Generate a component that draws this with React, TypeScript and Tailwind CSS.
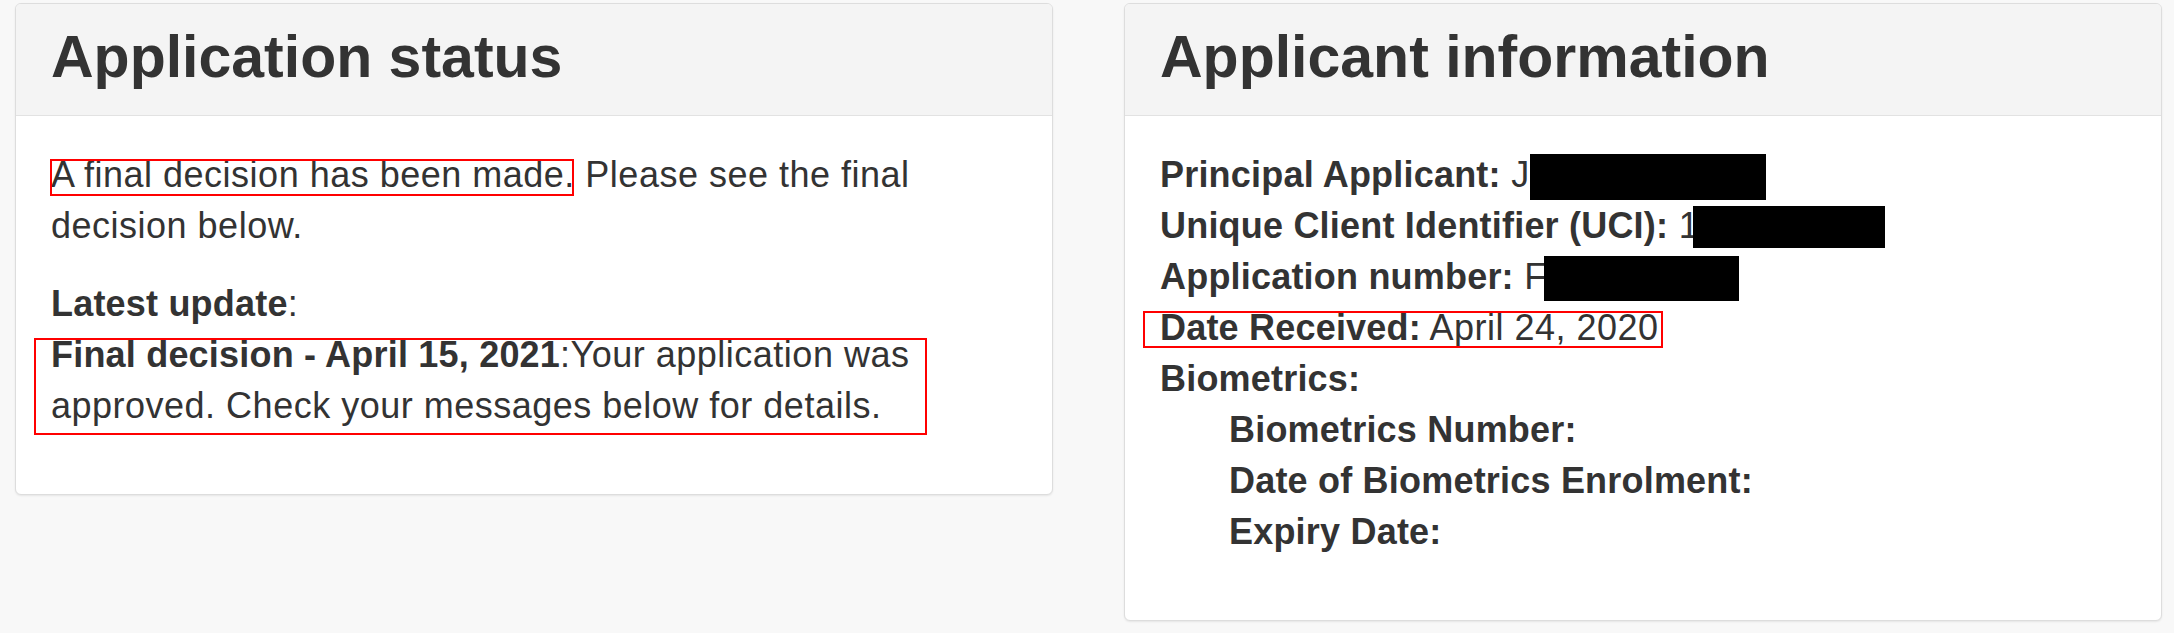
import React from 'react';

// red annotation frame drawn over the screenshot text
function Mark({ className }: { className: string }) {
  return <span className={`pointer-events-none absolute border-2 border-[#ff0000] ${className}`} />;
}

function Card({ title, children }: { title: string; children: React.ReactNode }) {
  return (
    <div className="rounded-[6px] border border-[#dddddd] bg-white shadow-[0_1px_2px_rgba(0,0,0,0.08)] overflow-hidden">
      <div className="bg-[#f4f4f4] border-b border-[#e2e2e2] px-[35px] pt-[21px] pb-[26px]">
        <h2 className="text-[59px] leading-[64px] font-bold text-[#333333]">{title}</h2>
      </div>
      <div className="px-[35px] pt-[33px] pb-[36px] text-[36px] leading-[51px] tracking-[0.5px] text-[#333333] [&_strong]:tracking-[0.2px] [&_.font-bold]:tracking-[0.2px]">
        {children}
      </div>
    </div>
  );
}

function Redacted({ w, h, shift }: { w: string; h: string; shift: string }) {
  return <span className={`inline-block align-top bg-black ${w} ${h} ${shift}`} />;
}

export default function App() {
  return (
    <div
      className="min-h-screen bg-[#f8f8f8] pt-[3px]"
      style={{ fontFamily: '"Liberation Sans", Helvetica, Arial, sans-serif' }}
    >
      <div className="grid grid-cols-2 items-start gap-[71px] pl-[15px] pr-[12px]">
        <Card title="Application status">
          <p className="mb-[27px]">
            <span className="relative">
              A final decision has been made.
              <Mark className="-left-[1px] top-[5px] w-[524px] h-[37px]" />
            </span>{' '}
            Please see the final decision below.
          </p>
          <div className="mb-[27px]">
            <div>
              <strong>Latest update</strong>:
            </div>
            <div className="relative">
              <strong>Final decision - April 15, 2021</strong>:Your application was approved. Check your messages below
              for details.
              <Mark className="-left-[17px] top-[9px] w-[893px] h-[97px]" />
            </div>
          </div>
        </Card>

        <Card title="Applicant information">
          <div className="mb-[27px]">
            <div className="whitespace-nowrap">
              <strong>Principal Applicant:</strong> J
              <Redacted w="w-[236px]" h="h-[46px]" shift="translate-y-[5px]" />
            </div>
            <div className="whitespace-nowrap">
              <strong>Unique Client Identifier (UCI):</strong> 1
              <Redacted w="w-[192px]" h="h-[42px]" shift="translate-y-[6px] -ml-[6px]" />
            </div>
            <div className="whitespace-nowrap">
              <strong>Application number:</strong> F
              <Redacted w="w-[195px]" h="h-[45px]" shift="translate-y-[5px] -ml-[3px]" />
            </div>
            <div>
              <span className="relative">
                <strong>Date Received:</strong> April 24, 2020
                <Mark className="-left-[17px] top-[4px] w-[520px] h-[37px]" />
              </span>
            </div>
            <div className="font-bold">Biometrics:</div>
            <div className="pl-[69px] font-bold">
              <div>Biometrics Number:</div>
              <div>Date of Biometrics Enrolment:</div>
              <div>Expiry Date:</div>
            </div>
          </div>
        </Card>
      </div>
    </div>
  );
}
